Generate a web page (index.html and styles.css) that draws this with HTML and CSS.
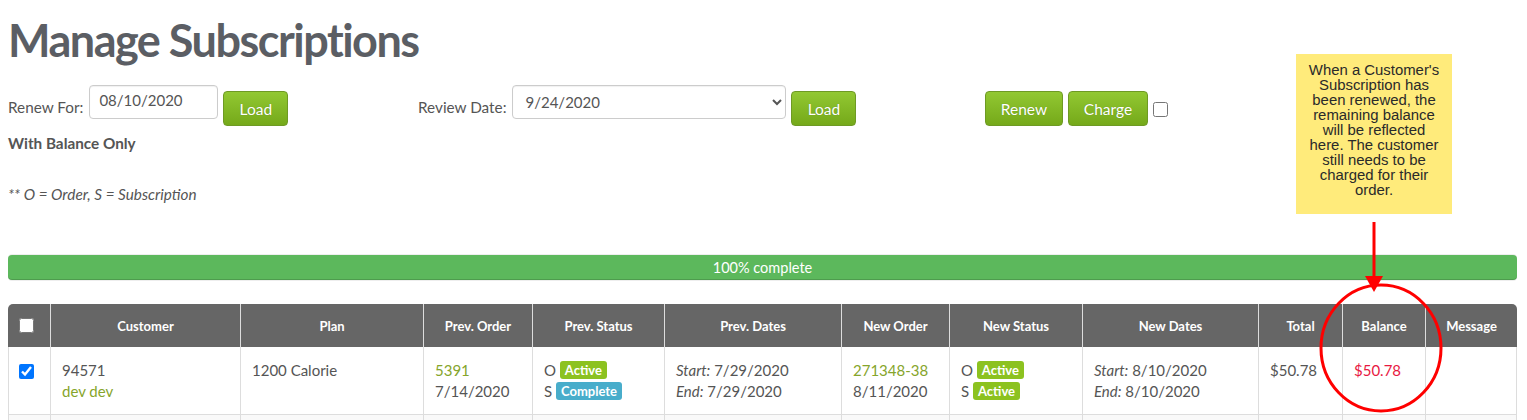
FILE: index.html
```html
<!DOCTYPE html>
<html lang="en">
<head>
<meta charset="utf-8">
<title>Manage Subscriptions</title>
<link rel="stylesheet" href="styles.css">
</head>
<body>
<div class="page">
  <h1 class="title">Manage Subscriptions</h1>

  <div class="controls">
    <div class="group">
      <label class="lbl">Renew For:</label>
      <input class="field date-input" type="text" value="08/10/2020">
      <button class="btn">Load</button>
    </div>
    <div class="group">
      <label class="lbl">Review Date:</label>
      <select class="field date-select"><option>9/24/2020</option></select>
      <button class="btn">Load</button>
    </div>
    <div class="group">
      <button class="btn btn-wide">Renew</button>
      <button class="btn btn-wide">Charge</button>
      <input class="chk-top" type="checkbox">
    </div>
  </div>

  <div class="balance-only">With Balance Only</div>
  <div class="legend">** O = Order, S = Subscription</div>

  <div class="progress"><div class="progress-bar">100% complete</div></div>

  <table class="grid">
    <colgroup>
      <col class="c-chk"><col class="c-cust"><col class="c-plan"><col class="c-porder"><col class="c-pstatus"><col class="c-pdates"><col class="c-norder"><col class="c-nstatus"><col class="c-ndates"><col class="c-total"><col class="c-bal"><col class="c-msg">
    </colgroup>
    <thead>
      <tr>
        <th class="th-first"><input type="checkbox" class="chk"></th>
        <th>Customer</th>
        <th>Plan</th>
        <th>Prev. Order</th>
        <th>Prev. Status</th>
        <th>Prev. Dates</th>
        <th>New Order</th>
        <th>New Status</th>
        <th>New Dates</th>
        <th>Total</th>
        <th>Balance</th>
        <th class="th-last">Message</th>
      </tr>
    </thead>
    <tbody>
      <tr>
        <td class="td-chk"><input type="checkbox" class="chk" checked></td>
        <td>94571<br><a class="lnk">dev dev</a></td>
        <td>1200 Calorie</td>
        <td><a class="lnk">5391</a><br>7/14/2020</td>
        <td>O <span class="badge badge-green">Active</span><br>S <span class="badge badge-blue">Complete</span></td>
        <td><i>Start:</i> 7/29/2020<br><i>End:</i> 7/29/2020</td>
        <td><a class="lnk">271348-38</a><br>8/11/2020</td>
        <td>O <span class="badge badge-green">Active</span><br>S <span class="badge badge-green">Active</span></td>
        <td><i>Start:</i> 8/10/2020<br><i>End:</i> 8/10/2020</td>
        <td>$50.78</td>
        <td class="due">$50.78</td>
        <td></td>
      </tr>
      <tr class="alt">
        <td class="td-chk"></td>
        <td></td><td></td><td></td><td></td><td></td><td></td><td></td><td></td><td></td><td></td><td></td>
      </tr>
    </tbody>
  </table>

  <div class="note">When a Customer's<br>Subscription has<br>been renewed, the<br>remaining balance<br>will be reflected<br>here. The customer<br>still needs to be<br>charged for their<br>order.</div>

  <svg class="annot" width="140" height="205" viewBox="0 0 140 205">
    <line x1="64" y1="7" x2="64" y2="64" stroke="#ff0000" stroke-width="3"/>
    <polygon points="55,61 73,61 64,77" fill="#ff0000"/>
    <ellipse cx="71" cy="133" rx="60" ry="63" fill="none" stroke="#ff0000" stroke-width="3"/>
  </svg>
</div>
</body>
</html>
```

FILE: styles.css
```css
* { box-sizing: border-box; }

html, body {
  margin: 0;
  padding: 0;
  background: #ffffff;
}

body {
  font-family: Lato, "Open Sans", sans-serif;
  font-size: 15px;
  color: #555555;
  overflow: hidden;
  height: 420px;
}

.page {
  position: relative;
  padding: 12px 10px 0 8px;
}

.title {
  margin: 0;
  height: 56px;
  font-size: 45px;
  line-height: 56px;
  font-weight: 700;
  color: #5b5e64;
  letter-spacing: -1.5px;
}

.controls {
  display: grid;
  grid-template-columns: 410px 567px auto;
  margin-top: 17px;
  height: 41px;
}

.group {
  display: flex;
  align-items: flex-start;
}

.lbl {
  margin-top: 12px;
  line-height: 20px;
  margin-right: 6px;
  font-size: 15.3px;
}

.field {
  height: 34px;
  border: 1px solid #cccccc;
  border-radius: 4px;
  background: #ffffff;
  font-family: inherit;
  font-size: 15px;
  color: #555555;
  box-shadow: inset 0 1px 1px rgba(0,0,0,0.06);
}

.date-input {
  width: 129px;
  padding: 0 9px 4px;
}

.date-select {
  width: 274px;
  padding: 0 8px 0;
}

.btn {
  margin-top: 6px;
  margin-left: 5px;
  height: 35px;
  width: 65px;
  border: 1px solid #6e9a24;
  border-radius: 4px;
  background: linear-gradient(#92c832, #75a91a);
  color: #ffffff;
  font-family: inherit;
  font-size: 15.5px;
  text-shadow: 0 0 1px rgba(0,0,0,0.25);
  padding: 0;
}

.btn-wide {
  width: 78px;
}

.btn-wide + .btn-wide {
  width: 80px;
}

.group:last-child .btn:first-child {
  margin-left: 0;
}

.chk-top {
  margin: 17px 0 0 5px;
  width: 15px;
  height: 15px;
}

.balance-only {
  margin-top: 7px;
  line-height: 20px;
  font-weight: 700;
  font-size: 15.3px;
}

.legend {
  margin-top: 31px;
  line-height: 20px;
  font-style: italic;
  font-size: 15.3px;
}

.progress {
  margin-top: 50px;
  height: 27px;
  background: #eeeeee;
  border-radius: 4px;
  padding-top: 1px;
}

.progress-bar {
  height: 25px;
  background: #5cb85c;
  border-radius: 4px;
  color: #ffffff;
  font-size: 14.5px;
  line-height: 25px;
  text-align: center;
  box-shadow: inset 0 -1px 0 rgba(0,0,0,0.15);
}

.grid {
  margin-top: 23px;
  width: 1509px;
  table-layout: fixed;
  border-collapse: separate;
  border-spacing: 0;
}

.c-chk { width: 42px; }
.c-cust { width: 190px; }
.c-plan { width: 183px; }
.c-porder { width: 109px; }
.c-pstatus { width: 132px; }
.c-pdates { width: 177px; }
.c-norder { width: 108px; }
.c-nstatus { width: 133px; }
.c-ndates { width: 176px; }
.c-total { width: 84px; }
.c-bal { width: 83px; }
.c-msg { width: 92px; }

.grid th {
  background: #666666;
  color: #ffffff;
  font-size: 13px;
  font-weight: 700;
  height: 43px;
  padding: 0 4px;
  text-align: center;
  border-left: 1px solid #dddddd;
}

.grid th.th-first {
  border-left: none;
  border-top-left-radius: 5px;
  padding: 0;
}

.grid th.th-last {
  border-top-right-radius: 5px;
}

.grid td {
  vertical-align: top;
  padding: 13px 11px 12px;
  line-height: 21px;
  border-left: 1px solid #dddddd;
  border-bottom: 1px solid #dddddd;
  height: 65px;
}

.grid td:last-child {
  border-right: 1px solid #dddddd;
}

.grid td.td-chk {
  padding: 17px 0 0 10px;
}

.chk {
  margin: 0;
  width: 15px;
  height: 15px;
  display: block;
}

.th-first .chk {
  margin: 0 0 0 11px;
}

.grid tr.alt td {
  background: #f9f9f9;
}

.lnk {
  color: #86a52b;
  text-decoration: none;
}

.due {
  color: #e8193f;
}

.badge {
  display: inline-block;
  color: #ffffff;
  font-size: 13px;
  font-weight: 700;
  line-height: 18px;
  padding: 0 5px;
  border-radius: 3px;
  vertical-align: 1px;
}

.badge-green { background: #8cc220; }
.badge-blue { background: #48adcb; }

.note {
  position: absolute;
  left: 1296px;
  top: 54px;
  width: 156px;
  height: 160px;
  background: #ffeb7b;
  color: #2a2a2a;
  font-family: "Liberation Sans", Arial, sans-serif;
  font-size: 14.9px;
  line-height: 15px;
  text-align: center;
  white-space: nowrap;
  padding: 9px 0 0;
}

.annot {
  position: absolute;
  left: 1310px;
  top: 215px;
}
```
